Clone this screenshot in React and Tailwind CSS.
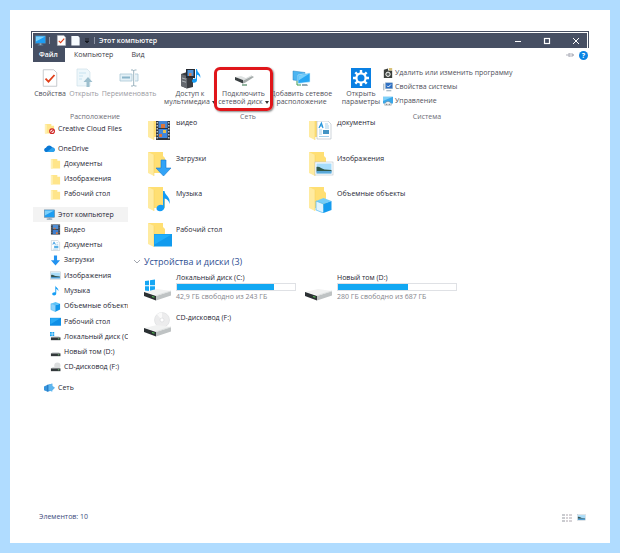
import { Fragment } from 'react';

/* ---------- small icons ---------- */

function Icon({ className = 'h-[11px] w-[11px]', box = '0 0 12 12', children }) {
  return (
    <svg viewBox={box} className={`shrink-0 ${className}`} aria-hidden="true">
      {children}
    </svg>
  );
}

const MonitorShape = () => (
  <>
    <rect x="0.5" y="1" width="11" height="8" fill="#1d9df2" stroke="#5b7f9c" strokeWidth="0.6" />
    <path d="M1 1.5h10L1 7z" fill="#7cd0fb" />
    <path d="M3 11h6" stroke="#5b7f9c" strokeWidth="1" />
    <path d="M6 9v2" stroke="#8fa9bc" strokeWidth="2" />
  </>
);

const FolderShape = () => (
  <>
    <path d="M1 1h7v2h3v8.500H1z" fill="#ffe58a" />
    <path d="M1 1l2 1v9.500H1z" fill="#fff0b5" />
  </>
);

const FilmShape = () => (
  <>
    <rect x="1" y="0.5" width="10" height="11" fill="#2c3440" />
    <rect x="3" y="1" width="6" height="4.6" fill="#4f8fd8" />
    <rect x="3" y="6.4" width="6" height="4.6" fill="#3f7fd0" />
    <path d="M4 4h2v1.6H4zM6.5 9h2v2h-2z" fill="#d8763a" />
    <path d="M2 1v10M10 1v10" stroke="#b9c4cf" strokeWidth="0.8" strokeDasharray="1 1" />
  </>
);

const DocShape = () => (
  <>
    <path d="M1.5.5h7l2 2v9h-9z" fill="#fff" stroke="#b5c2cb" strokeWidth="0.6" />
    <path d="M3 5l1.4-3L6 5M3.5 4h2" stroke="#2f97df" strokeWidth="0.8" fill="none" />
    <path d="M7 3h2M7 5h2M3 10h6" stroke="#7fb7dc" strokeWidth="0.6" />
    <rect x="4.5" y="6.3" width="4.6" height="2.6" fill="#59b1e6" />
  </>
);

const PictureShape = () => (
  <>
    <rect x="0.4" y="2" width="11.2" height="8" fill="#fff" stroke="#b8c3cc" strokeWidth="0.6" />
    <rect x="1.2" y="2.8" width="9.6" height="6.4" fill="#aadcf8" />
    <path d="M1.2 5.4c2-1 3 .9 5 1.2l4.6.5v.7H1.2z" fill="#34534f" />
    <path d="M1.2 7.6h9.6v1.6H1.2z" fill="#4a98cf" />
  </>
);

const DownShape = () => <path d="M4.3.5h3.4v5.3H11L6 11.5 1 5.8h3.3z" fill="#2393f0" />;

const NoteShape = () => (
  <path
    d="M5.8.5c.3 2.2 4 2.6 3.3 6.4-.3-1.7-1.3-2.2-2.3-2.6v4.9c0 1.300-1 2.200-2.400 2.200-1.200 0-2-.6-2-1.500 0-1.100 1.100-1.900 2.400-1.900.4 0 .7.1 1 .2z"
    fill="#159df5"
  />
);

const CubeShape = () => (
  <>
    <path d="M1 3l5-2 5 2-5 1.6z" fill="#5cc3f7" />
    <path d="M1 3l5 1.6v7L1 9.4z" fill="#8fd2f8" stroke="#35aef2" strokeWidth="0.5" />
    <path d="M11 3L6 4.6v7l5-2.2z" fill="#0f96ea" />
  </>
);

const DesktopShape = () => (
  <>
    <rect x="0" y="2" width="12" height="8.6" fill="#0f8fe6" />
    <path d="M.5 2.5h10.6L.5 9z" fill="#2aaaf5" />
  </>
);

const DriveShape = () => (
  <>
    <path d="M1 7l2-1.6h6.5L11.4 7z" fill="#d9dcdd" />
    <rect x="1" y="7" width="10.4" height="3" fill="#33383b" />
    <rect x="8.6" y="8" width="1.5" height="1" fill="#79c779" />
  </>
);

const WinShape = () => (
  <path d="M0 1h2v2H0zM2.6 1h2v2h-2zM0 3.6h2v2H0zM2.6 3.6h2v2h-2z" fill="#16a2f2" />
);

const CloudShape = () => (
  <>
    <path d="M3 9.8C1.3 9.8.2 8.8.2 7.5c0-1.2.9-2 2-2.2C2.7 3.6 4 2.6 5.6 2.6c1.5 0 2.6.8 3.1 2 1.8 0 3.1 1.1 3.1 2.7 0 1.5-1.1 2.5-2.7 2.5z" fill="#0a78d4" />
    <path d="M3 9.8l5.4-4.4c1.7-1 3.4.4 3.4 2 0 1.4-1.1 2.4-2.7 2.4z" fill="#2aa2ee" />
  </>
);

const NetworkShape = () => (
  <>
    <path d="M0 5l4-2 5-1v7l-5 1.6L0 9z" fill="#3794dc" />
    <path d="M5 3l4-1.5V4l3 2.4-3 2.8v1.3L5 9z" fill="#5fb6ef" />
    <path d="M4 3v7.5" stroke="#1a65b0" strokeWidth="0.6" />
  </>
);

const BlockedFolder = () => (
  <>
    <FolderShape />
    <circle cx="8.8" cy="9" r="2.6" fill="#fff" stroke="#cf2222" strokeWidth="1.2" />
    <path d="M7 10.8l3.6-3.6" stroke="#cf2222" strokeWidth="1.1" />
  </>
);

const CheckedPage = () => (
  <>
    <path d="M1.5.5h7l2 2v9h-9z" fill="#fff" stroke="#b3b8bd" strokeWidth="0.5" />
    <path d="M3 6.4l2 2 4-4.4" stroke="#e0401b" strokeWidth="1.2" fill="none" />
  </>
);

/* ---------- large folder and drive icons ---------- */

function BigFolder({ children }) {
  return (
    <Icon className="h-[27px] w-[27px]" box="0 0 27 27">
      <path d="M1 1h15v4l2 2v15H6z" fill="#ffdf73" />
      <path d="M1 1l6 3v21l-6-3z" fill="#ffeba0" />
      <path d="M7 4v21" stroke="#f3cf5f" strokeWidth="0.5" />
      {children}
    </Icon>
  );
}

const BigDrive = ({ children }) => (
  <Icon className="h-[28px] w-[29px]" box="0 0 29 28">
    {children}
    <path d="M0 19l13-3 14 2-15 4z" fill="#f1f2f2" />
    <path d="M0 19l12 4v4.500L0 23z" fill="#2b3033" />
    <path d="M12 23l15-5v4.500l-15 5z" fill="#bfc3c4" />
    <path d="M12 22.500l15-4.500" stroke="#dfe2e2" strokeWidth="1" />
    <path d="M8 23.500l2.500.8" stroke="#55c255" strokeWidth="1.200" />
  </Icon>
);

const folderItems = [
  {
    name: 'Видео',
    icon: (
      <BigFolder>
        <rect x="9" y="3" width="14" height="22" fill="#2f343c" />
        <rect x="11.500" y="4" width="9" height="9" fill="#4587d6" />
        <rect x="11.500" y="14" width="9" height="9" fill="#3f86dc" />
        <path d="M14 9h4v4h-4zM12 19h3v3h-3z" fill="#d9763d" />
        <path d="M16 15h3v3h-3z" fill="#e6c04d" />
        <path d="M10.200 4v20M21.800 4v20" stroke="#dfe5ea" strokeWidth="1.200" strokeDasharray="1.500 1.500" />
      </BigFolder>
    ),
  },
  {
    name: 'Документы',
    icon: (
      <BigFolder>
        <path d="M9 6h11l3 3v15H9z" fill="#fff" stroke="#aebbc4" strokeWidth="0.6" />
        <path d="M11 13l2.400-5 1.600 5M12 11h3" stroke="#2796dd" strokeWidth="1.200" fill="none" />
        <path d="M17 9h3M17 11h4M17 13h4M11 21.500h10M11 15h3M11 17h3M11 19h3" stroke="#8fc4e4" strokeWidth="0.8" />
        <rect x="15" y="15" width="6" height="4" fill="#4394c4" />
      </BigFolder>
    ),
  },
  {
    name: 'Загрузки',
    icon: (
      <BigFolder>
        <path d="M14 9h5v8h5l-7.500 8L9 17h5z" fill="#32a3f7" stroke="#1577cf" strokeWidth="0.6" />
      </BigFolder>
    ),
  },
  {
    name: 'Изображения',
    icon: (
      <BigFolder>
        <rect x="7" y="11" width="18" height="13" fill="#fff" stroke="#b8c2c9" strokeWidth="0.6" />
        <rect x="8.500" y="12.500" width="15" height="10" fill="#a6dcfb" />
        <path d="M8.500 16c3-1 5 2 8 2.400l7 .6v1.500h-15z" fill="#315a4c" />
        <path d="M8.500 20h15v2.500h-15z" fill="#5aa8d8" />
      </BigFolder>
    ),
  },
  {
    name: 'Музыка',
    icon: (
      <BigFolder>
        <path
          d="M16 5h1.500c.5 5 6.500 5.500 5 13-.5-3.500-2.500-5-5-5.500V21c0 2.500-2 4.200-4.500 4.200-2 0-3.500-1-3.500-2.700 0-2.200 2-3.700 4.500-3.700.8 0 1.500.2 2 .5z"
          fill="#129cf6"
        />
      </BigFolder>
    ),
  },
  {
    name: 'Объемные объекты',
    icon: (
      <BigFolder>
        <path d="M8 15l7.500-3 8 3-8 3z" fill="#74cdf8" />
        <path d="M8 15l7.500 3v9L8 24z" fill="#dff3fd" stroke="#35b0f2" strokeWidth="0.6" />
        <path d="M23.500 15l-8 3v9l8-3z" fill="#149bee" />
      </BigFolder>
    ),
  },
  {
    name: 'Рабочий стол',
    icon: (
      <BigFolder>
        <rect x="7" y="12" width="18" height="12.500" fill="#119bee" />
        <path d="M7.500 12.500h17l-17 10z" fill="#1faefb" />
      </BigFolder>
    ),
  },
];

const drives = [
  {
    name: 'Локальный диск (C:)',
    used: 82,
    info: '42,9 ГБ свободно из 243 ГБ',
    icon: (
      <BigDrive>
        <path d="M1 8l4-.6v4.800H1zM6 7.200l5-.7v5.700H6zM1 13.200h4V18l-4-.6zM6 13.200h5v5.700l-5-.7z" fill="#14a6f4" />
      </BigDrive>
    ),
  },
  { name: 'Новый том (D:)', used: 59, info: '280 ГБ свободно из 687 ГБ', icon: <BigDrive /> },
  {
    name: 'CD-дисковод (F:)',
    icon: (
      <BigDrive>
        <circle cx="18" cy="11" r="7.500" fill="#ececed" stroke="#d4d6d8" strokeWidth="0.5" />
        <path d="M18 11l-5-5.400a7.500 7.500 0 0 1 5-2z" fill="#fafafa" />
        <circle cx="18" cy="11" r="2" fill="#fff" stroke="#cfd1d3" strokeWidth="0.5" />
      </BigDrive>
    ),
  },
];

const cloudLinks = [
  { name: 'OneDrive', icon: <CloudShape /> },
  { name: 'Документы', icon: <FolderShape />, nested: true },
  { name: 'Изображения', icon: <FolderShape />, nested: true },
  { name: 'Рабочий стол', icon: <FolderShape />, nested: true },
];

const pcLinks = [
  { name: 'Этот компьютер', icon: <MonitorShape />, active: true },
  { name: 'Видео', icon: <FilmShape />, nested: true },
  { name: 'Документы', icon: <DocShape />, nested: true },
  { name: 'Загрузки', icon: <DownShape />, nested: true },
  { name: 'Изображения', icon: <PictureShape />, nested: true },
  { name: 'Музыка', icon: <NoteShape />, nested: true },
  { name: 'Объемные объекты', icon: <CubeShape />, nested: true },
  { name: 'Рабочий стол', icon: <DesktopShape />, nested: true },
  { name: 'Локальный диск (C:)', icon: <><WinShape /><DriveShape /></>, nested: true },
  { name: 'Новый том (D:)', icon: <DriveShape />, nested: true },
  {
    name: 'CD-дисковод (F:)',
    icon: <><circle cx="8" cy="4" r="3.400" fill="#dcdedf" /><DriveShape /></>,
    nested: true,
  },
];

function TreeLink({ name, icon, nested, active }) {
  return (
    <li className="flex min-w-0">
      <a
        href="#"
        className={`flex min-w-0 flex-1 items-center gap-[3px] overflow-hidden whitespace-nowrap ${nested ? 'pl-[17px]' : 'pl-[11px]'} ${active ? 'bg-[#f3f3f3]' : ''}`}
      >
        <Icon>{icon}</Icon>
        {name}
      </a>
    </li>
  );
}

function RibbonButton({ icon, lines, width, muted, arrow }) {
  return (
    <button className={`flex shrink-0 flex-col items-center ${width} ${muted ? 'text-[#9a9aa2]' : ''}`}>
      <span className="flex h-[24px] items-center">{icon}</span>
      {lines.map((line, i) => (
        <span key={line} className="flex items-center gap-[2px] whitespace-nowrap">
          {line}
          {arrow && i === lines.length - 1 && (
            <Icon className="h-[3px] w-[4px]" box="0 0 4 3">
              <path d="M0 0h4L2 3z" fill="#333" />
            </Icon>
          )}
        </span>
      ))}
    </button>
  );
}

function RibbonGroup({ title, children }) {
  return (
    <section className="flex shrink-0 flex-col justify-between">
      <div className="flex items-start">{children}</div>
      <h2 className="text-center text-[#6c6c76]">{title}</h2>
    </section>
  );
}

function TitleBar() {
  return (
    <header className="flex h-[15px] items-center bg-[#464f63] pr-[7px] pl-[2px] text-white">
      <Icon><MonitorShape /></Icon>
      <i className="ml-[3px] h-[7px] w-px bg-[#8b93a3]" />
      <button aria-label="Свойства" className="ml-[6px]"><Icon><CheckedPage /></Icon></button>
      <button aria-label="Новая папка" className="ml-[3px]">
        <Icon><path d="M1.500 1h7.500l1.500 2v8.500h-9z" fill="#f6fbff" /></Icon>
      </button>
      <button aria-label="Настройка панели" className="ml-[3px]">
        <Icon className="h-[6px] w-[6px]" box="0 0 6 6"><path d="M1 1h4M1 3l2 2 2-2z" stroke="#14181f" fill="#14181f" strokeWidth="0.8" /></Icon>
      </button>
      <i className="ml-[4px] h-[7px] w-px bg-[#8b93a3]" />
      <h1 className="ml-[4px] flex-1 font-semibold">Этот компьютер</h1>
      <div className="flex gap-[21px]">
        <button aria-label="Свернуть"><Icon className="h-[8px] w-[8px]" box="0 0 8 8"><path d="M1 4.500h6" stroke="#fff" /></Icon></button>
        <button aria-label="Развернуть"><Icon className="h-[8px] w-[8px]" box="0 0 8 8"><rect x="1.500" y="1.500" width="5" height="5" fill="none" stroke="#fff" strokeWidth="1.200" /></Icon></button>
        <button aria-label="Закрыть"><Icon className="h-[8px] w-[8px]" box="0 0 8 8"><path d="M1 1l6 6M7 1L1 7" stroke="#fff" /></Icon></button>
      </div>
    </header>
  );
}

function Tabs() {
  return (
    <nav className="flex h-[14px] items-center">
      <a href="#" className="flex h-full w-[32px] items-center bg-[#464f63] pl-[6px] font-semibold text-white">Файл</a>
      <a href="#" className="ml-[9px] text-[#3c3c48]">Компьютер</a>
      <a href="#" className="ml-[18px] flex-1 text-[#3c3c48]">Вид</a>
      <button aria-label="Закрепить ленту">
        <Icon className="h-[8px] w-[8px]" box="0 0 8 8"><path d="M0 4h3M3 2v4M3 3h4v2H3M7 3v2" stroke="#a6a8b3" strokeWidth="0.9" fill="none" /></Icon>
      </button>
      <button aria-label="Справка" className="ml-[5px] h-[9px] w-[9px] rounded-full bg-[#0a84e4] leading-[9px] font-bold text-white">?</button>
    </nav>
  );
}

function Ribbon() {
  return (
    <div className="flex h-[59px] gap-[6px] pt-[4px] leading-[8px] text-[#50505a]">
      <RibbonGroup title="Расположение">
        <RibbonButton width="w-[34px]" lines={['Свойства']} icon={<Icon className="h-[20px] w-[18px]" box="0 0 12 12"><CheckedPage /></Icon>} />
        <RibbonButton
          muted
          width="w-[34px]"
          lines={['Открыть']}
          icon={
            <Icon className="h-[20px] w-[18px]" box="0 0 18 20">
              <path d="M2 1h10l3 3v14H2z" fill="#eef7fb" stroke="#c8dce5" strokeWidth="0.6" />
              <path d="M4 5h7M4 8h4M4 11h3" stroke="#c8e3f0" />
              <path d="M11.500 19v-5H8.500l4.500-5 4.500 5h-3v5z" fill="#9dbfce" />
            </Icon>
          }
        />
        <RibbonButton
          muted
          width="w-[56px]"
          lines={['Переименовать']}
          icon={
            <Icon className="h-[20px] w-[20px]" box="0 0 20 20">
              <path d="M1 6h12v7H1zM16 6h3v7h-3" fill="#e4f1f7" stroke="#a9c8d6" strokeWidth="0.8" />
              <path d="M3 9.500h8" stroke="#8bb5ca" strokeWidth="2" />
              <path d="M12 2h2l.7 1 .8-1h2M14.700 3v14M12 18h2l.7-1 .8 1h2" stroke="#9bb3bf" fill="none" />
            </Icon>
          }
        />
      </RibbonGroup>

      <RibbonGroup title="Сеть">
        <RibbonButton
          arrow
          width="w-[54px]"
          lines={['Доступ к', 'мультимедиа']}
          icon={
            <Icon className="h-[21px] w-[21px]" box="0 0 21 21">
              <path d="M1 6l6-2 6 2v13l-6 1.500L1 18z" fill="#3a3d42" />
              <path d="M1 6l6 2v12.500L1 18z" fill="#65696f" />
              <path d="M2 10l4 1.200M2 13l4 1.200" stroke="#c3c8cc" strokeWidth="0.8" />
              <rect x="6" y="1" width="9" height="9" fill="#262a31" />
              <rect x="7.500" y="2" width="6" height="6" fill="#4d94dc" />
              <path d="M9 5h2.500v3H9z" fill="#d8804b" />
              <path d="M16 1h1c.3 4 4 4 3.300 9-.6-2-1.800-3-3.300-3.200V12c0 1.800-1.300 2.800-2.800 2.800-1.400 0-2.200-.7-2.200-1.800 0-1.500 1.400-2.500 3-2.500l1 .2z" fill="#149cf5" />
            </Icon>
          }
        />
        <div className="relative">
          <RibbonButton
            arrow
            width="w-[53px]"
            lines={['Подключить', 'сетевой диск']}
            icon={
              <Icon className="h-[20px] w-[20px]" box="0 0 20 20">
                <path d="M1 9l6-1 6 2.500-4 1.500z" fill="#e0e3e3" />
                <path d="M1 9l8 3v3.500l-8-3.500z" fill="#3a4042" />
                <path d="M9 12.500l9-4.500 2 1-8.500 5.500L9 15.500z" fill="#a4abaa" />
                <path d="M9 12l9-4.500" stroke="#dadede" strokeWidth="1" />
                <path d="M8 17h5" stroke="#6f9c80" strokeWidth="1.500" />
              </Icon>
            }
          />
          <span className="pointer-events-none absolute -inset-x-[3px] top-px h-[44px] rounded-[6px] border-[3px] border-[#e0161a] shadow-[1px_1px_2px_#888]" />
        </div>
        <RibbonButton
          width="w-[63px]"
          lines={['Добавить сетевое', 'расположение']}
          icon={
            <Icon className="h-[19px] w-[19px]" box="0 0 19 19">
              <path d="M1 2l12 1.500v9L1 11z" fill="#4db5f1" stroke="#2583c2" strokeWidth="0.5" />
              <path d="M6 6l12-2v9L6 14.500z" fill="#27a6f3" stroke="#d8f0fc" strokeWidth="0.6" />
              <path d="M6.500 6.500l11-2-11 7z" fill="#77cffb" />
              <path d="M10 15h5l1 2h-6z" fill="#96a9b5" />
              <path d="M5 12v4h4" stroke="#3d9a50" fill="none" />
            </Icon>
          }
        />
      </RibbonGroup>

      <RibbonGroup title="Система">
        <RibbonButton
          width="w-[44px]"
          lines={['Открыть', 'параметры']}
          icon={
            <Icon className="h-[20px] w-[20px]" box="0 0 20 20">
              <rect width="20" height="20" fill="#0a80e3" />
              <circle cx="10" cy="10" r="4.600" fill="none" stroke="#fff" strokeWidth="2.200" />
              <path d="M10 2v3M10 15v3M2 10h3M15 10h3M4.300 4.300l2.200 2.200M13.500 13.500l2.200 2.200M4.300 15.700l2.200-2.200M13.500 6.500l2.200-2.200" stroke="#fff" strokeWidth="2.400" />
            </Icon>
          }
        />
        <ul className="flex w-[132px] flex-col gap-[3px] pt-px whitespace-nowrap">
          <li>
            <button className="flex h-[11px] items-center gap-[2px]">
              <Icon className="h-[10px] w-[10px]">
                <path d="M1 2l5-1.500V3h5v9H1z" fill="#3b3f3c" />
                <path d="M7 0h4v3H7z" fill="#d8c27a" />
                <circle cx="6" cy="7.500" r="2.600" fill="#5a605c" stroke="#fff" strokeWidth="1.200" />
              </Icon>
              Удалить или изменить программу
            </button>
          </li>
          <li>
            <button className="flex h-[11px] items-center gap-[2px]">
              <Icon className="h-[10px] w-[10px]">
                <rect x="3" y="1" width="8.500" height="7" fill="#2c6fc4" stroke="#8da7bc" strokeWidth="0.6" />
                <path d="M5 4.500l1.500 1.500L9.500 3" stroke="#fff" fill="none" strokeWidth="1.200" />
                <path d="M1 2v8M4 10.500h6" stroke="#7d95a6" />
              </Icon>
              Свойства системы
            </button>
          </li>
          <li>
            <button className="flex h-[11px] items-center gap-[2px]">
              <Icon className="h-[10px] w-[10px]">
                <rect y="1" width="12" height="8" fill="#3ba7e8" />
                <path d="M0 1h12L0 6z" fill="#7fd0f8" />
                <path d="M2 11c0-3 2-4.500 4-4.500s4 1.500 4 4.500z" fill="#f2f2f2" stroke="#5f7584" strokeWidth="0.5" />
                <path d="M4 10h1M7 10h1" stroke="#333" />
              </Icon>
              Управление
            </button>
          </li>
        </ul>
      </RibbonGroup>
    </div>
  );
}

function Sidebar() {
  return (
    <nav className="w-[95px] shrink-0 pb-3 font-medium">
      <ul className="grid h-[15px] grid-cols-1">
        <TreeLink name="Creative Cloud Files" icon={<BlockedFolder />} />
      </ul>
      <ul className="mt-[5px] grid h-[61px] auto-rows-fr grid-cols-1">
        {cloudLinks.map((link) => <TreeLink key={link.name} {...link} />)}
      </ul>
      <ul className="mt-[5px] grid h-[168px] auto-rows-fr grid-cols-1">
        {pcLinks.map((link) => <TreeLink key={link.name} {...link} />)}
      </ul>
      <ul className="mt-[5px] grid h-[15px] grid-cols-1">
        <TreeLink name="Сеть" icon={<NetworkShape />} />
      </ul>
    </nav>
  );
}

function Content() {
  return (
    <main className="min-w-0 flex-1 overflow-hidden pl-[5px]">
      {/* the list is scrolled a little, so the first row is cut by the ribbon */}
      <ul className="-mt-[6px] ml-[14px] grid h-[142px] auto-rows-fr grid-cols-[161px_161px] font-medium">
        {folderItems.map((item) => (
          <li key={item.name} className="flex gap-[2px]">
            {item.icon}
            <span className="pt-[3px]">{item.name}</span>
          </li>
        ))}
      </ul>
      <h2 className="flex items-center gap-[3px] text-[9px] leading-[10px] text-[#2f4f93]">
        <Icon className="h-[6px] w-[8px]" box="0 0 8 6"><path d="M1 1l3 3 3-3" fill="none" stroke="#8a8f99" strokeWidth="0.8" /></Icon>
        Устройства и диски (3)
      </h2>
      <ul className="mt-[6px] ml-[11px] grid auto-rows-[36px] grid-cols-[161px_161px]">
        {drives.map((drive) => (
          <li key={drive.name} className="flex gap-[3px]">
            {drive.icon}
            <div className="w-[120px]">
              <p className={drive.info ? 'font-medium' : 'pt-[4px] font-medium'}>{drive.name}</p>
              {drive.info && (
                <Fragment>
                  <div className="h-[8px] border border-[#dfe1e5] bg-white">
                    <div className="h-full bg-[#12a8f3]" style={{ width: `${drive.used}%` }} />
                  </div>
                  <p className="pt-px text-[#85858d]">{drive.info}</p>
                </Fragment>
              )}
            </div>
          </li>
        ))}
      </ul>
    </main>
  );
}

export default function App() {
  return (
    <div className="flex min-h-screen flex-col bg-[#b0dcff] p-[10px] font-['Open_Sans','Noto_Sans',sans-serif] text-[7px] leading-[10px] text-[#252533]">
      <div className="flex flex-1 flex-col bg-white px-[21px] pt-[21px] pb-[21px]">
        <div className="flex flex-1 flex-col">
          <div className="border-x border-t border-[#464f63] px-px pt-px">
            <TitleBar />
          </div>
          <div className="flex flex-1 flex-col pr-px pl-[2px]">
            <Tabs />
            <Ribbon />
            <div className="flex flex-1">
              <Sidebar />
              <Content />
            </div>
            <footer className="flex items-center justify-between pr-[2px] pl-[6px] text-[#3c4a7c]">
              <span>Элементов: 10</span>
              <div className="flex gap-[5px]">
                <button aria-label="Таблица">
                  <Icon className="h-[9px] w-[10px]" box="0 0 10 9">
                    <path d="M0 1h3v2H0zM0 4h3v2H0zM0 7h3v2H0z" fill="#c9cbcf" />
                    <path d="M4 2h2M7 2h3M4 5h2M7 5h3M4 8h2M7 8h3" stroke="#9a8f9a" strokeWidth="0.8" />
                  </Icon>
                </button>
                <button aria-label="Крупные значки"><Icon className="h-[9px] w-[9px]"><PictureShape /></Icon></button>
              </div>
            </footer>
          </div>
        </div>
      </div>
    </div>
  );
}
